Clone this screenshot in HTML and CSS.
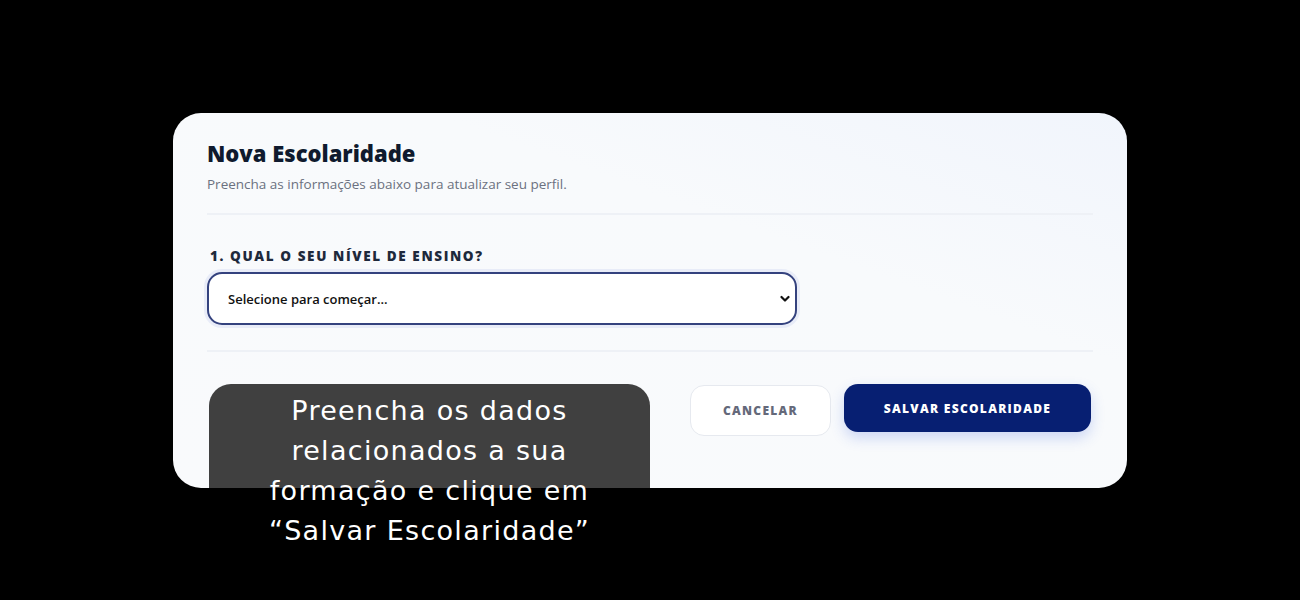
FILE: index.html
```html
<!DOCTYPE html>
<html lang="pt-BR">
<head>
    <meta charset="UTF-8">
    <meta name="viewport" content="width=device-width, initial-scale=1.0">
    <title>Nova Escolaridade</title>
    <link rel="stylesheet" href="styles.css">
</head>
<body>
    <div class="stage">
        <section class="edu-card">
            <header class="edu-head">
                <h1>Nova Escolaridade</h1>
                <p>Preencha as informações abaixo para atualizar seu perfil.</p>
            </header>

            <div class="edu-field">
                <label for="nivel">1. Qual o seu nível de ensino?</label>
                <div class="select-box">
                    <select id="nivel">
                        <option>Selecione para começar...</option>
                    </select>
                    <svg class="select-arrow" width="10" height="8" viewBox="0 0 10 8"><path d="M1.5 2 L5 5.5 L8.5 2" fill="none" stroke="#111" stroke-width="2.2" stroke-linecap="round" stroke-linejoin="round"/></svg>
                </div>
            </div>

            <footer class="edu-actions">
                <button class="btn btn-cancel">Cancelar</button>
                <button class="btn btn-save">Salvar Escolaridade</button>
            </footer>
        </section>

        <!-- balão de ajuda sobre o rodapé do cartão -->
        <div class="hint">
            <p>Preencha os dados relacionados a sua formação e clique em “Salvar Escolaridade”</p>
        </div>
    </div>
</body>
</html>
```

FILE: styles.css
```css
*{margin:0; padding:0; box-sizing: border-box}
html,body{background:#000; height:100%;}
body{font-family: "Open Sans", Lato, sans-serif;}
.stage{position: relative; width: 1300px; height: 600px; padding-top: 113px;}

.edu-card{width: 954px; height: 375px; margin: 0 auto; padding: 26px 34px 0; border-radius: 28px; background: linear-gradient(200deg, #f1f5fc 0%, #f8fafc 35%, #f9fafc 100%);}
.edu-head{padding-bottom: 20px; border-bottom: 2px solid #eef1f6;}
.edu-head h1{font-size: 22px; font-weight: 800; color: #0f1a2e; line-height: 28px;}
.edu-head p{font-size: 13.5px; color: #6b7180; margin-top: 8px; line-height: 18px;}

.edu-field{padding: 32px 0 25px; border-bottom: 2px solid #eef1f6;}
.edu-field label{display: block; font-size: 13.5px; font-weight: 800; color: #1e293b; text-transform: uppercase; letter-spacing: 1.6px; padding-left: 3px; margin-bottom: 7px; line-height: 18px;}
.select-box{position: relative; width: 590px;}
.select-box select{width: 100%; height: 53px; padding: 0 19px; border: 2px solid #34427e; border-radius: 15px; background: #fff; font-family: "Open Sans", sans-serif; font-size: 13px; font-weight: 600; color: #111; appearance: none; box-shadow: 0 0 0 3px rgba(120,140,220,0.12);}
.select-arrow{position: absolute; right: 7px; top: 23px;}

.edu-actions{display: flex; justify-content: flex-end; gap: 13px; padding-top: 32px; padding-right: 2px;}
.btn{border-radius: 14px; font-family: "Open Sans", sans-serif; font-size: 12px; font-weight: 800; letter-spacing: 1.3px; text-transform: uppercase; cursor: pointer;}
.btn-cancel{width: 141px; height: 51px; margin-top: 1px; background: #fff; color: #64697a; border: 1px solid #e6e9ef;}
.btn-save{width: 247px; height: 48px; background: #071f72; color: #fff; border: none; box-shadow: 0 6px 14px rgba(50,90,220,0.22);}

.hint{position: absolute; left: 209px; top: 384px; width: 441px; height: 104px; background: #404040; border-radius: 22px 22px 0 0;}
.hint p{padding: 7px 40px 0; text-align: center; color: #fff; font-family: "DejaVu Sans", sans-serif; font-size: 27px; letter-spacing: 1.3px; line-height: 40px;}
```
